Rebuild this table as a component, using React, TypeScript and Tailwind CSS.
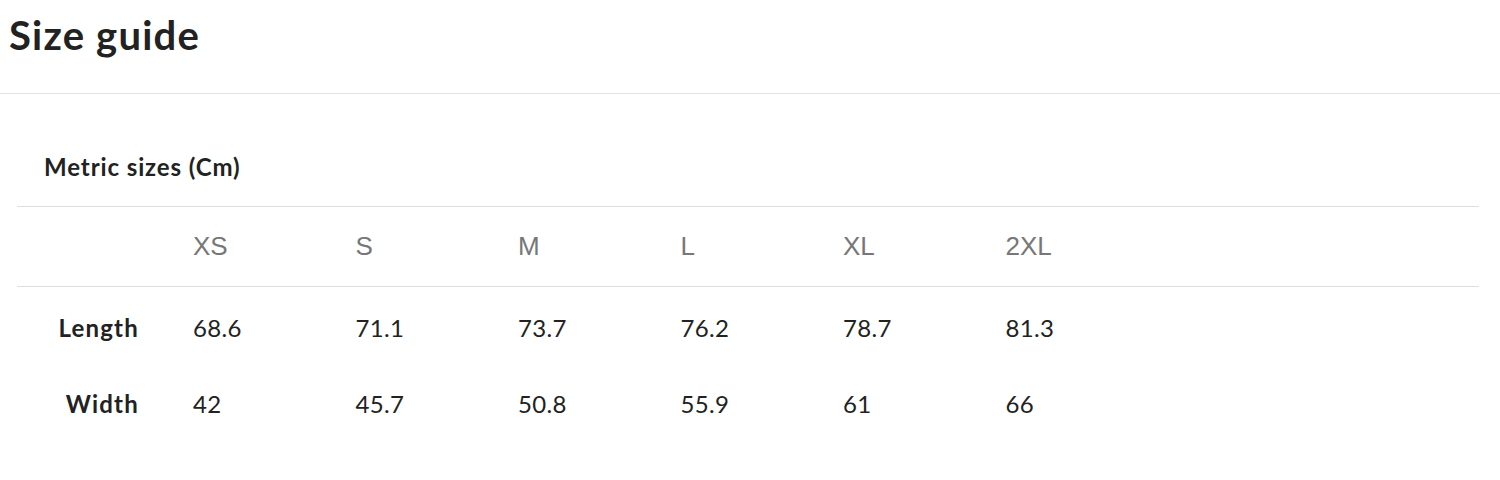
const sizes = ["XS", "S", "M", "L", "XL", "2XL"];

const rows = [
  { label: "Length", values: ["68.6", "71.1", "73.7", "76.2", "78.7", "81.3"] },
  { label: "Width", values: ["42", "45.7", "50.8", "55.9", "61", "66"] },
];

const grid = "grid grid-cols-[149px_repeat(6,162.5px)_1fr] items-center";

export default function App() {
  return (
    <div className="w-[1500px] h-[480px] bg-white text-[#222] font-['Lato',sans-serif]">
      {/* header */}
      <div className="h-[94px] border-b border-[#e2e2e2] pl-[9px] pt-[11px]">
        <h1 className="text-[40px] leading-[48px] font-bold tracking-[1.2px]">Size guide</h1>
      </div>

      <div className="pl-[17px] pr-[21px]">
        <div className="h-[113px] border-b border-[#dedede] pl-[27px] pt-[59px]">
          <h2 className="text-[24px] leading-[28px] font-bold tracking-[0.9px]">Metric sizes (Cm)</h2>
        </div>

        {/* size header */}
        <div className={`${grid} h-[80px] border-b border-[#dedede]`}>
          <div />
          {sizes.map((s) => (
            <div key={s} className="pl-[27px] text-[26px] text-[#777] font-['Liberation_Sans',sans-serif]">
              {s}
            </div>
          ))}
          <div />
        </div>

        <div className="pt-[3px]">
          {rows.map((r) => (
            <div key={r.label} className={`${grid} h-[76px]`}>
              <div className="pr-[27px] text-right text-[24px] font-bold tracking-[1.2px]">{r.label}</div>
              {r.values.map((v, i) => (
                <div key={i} className="pl-[27px] text-[24px] tracking-[0.3px]">
                  {v}
                </div>
              ))}
              <div />
            </div>
          ))}
        </div>
      </div>
    </div>
  );
}
